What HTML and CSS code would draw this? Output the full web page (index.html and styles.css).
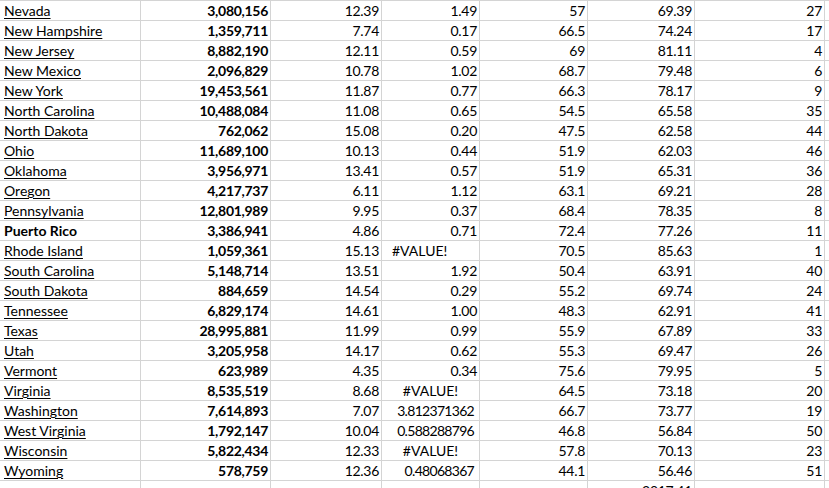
FILE: index.html
```html
<!DOCTYPE html>
<html>
<head>
<meta charset="utf-8">
<link rel="stylesheet" href="styles.css">
</head>
<body>
<div class="sheet">
  <div class="c name"><u>Nevada</u></div><div class="c pop">3,080,156</div><div class="c num">12.39</div><div class="c num">1.49</div><div class="c num">57</div><div class="c num">69.39</div><div class="c num">27</div><div class="c"></div>
  <div class="c name"><u>New Hampshire</u></div><div class="c pop">1,359,711</div><div class="c num">7.74</div><div class="c num">0.17</div><div class="c num">66.5</div><div class="c num">74.24</div><div class="c num">17</div><div class="c"></div>
  <div class="c name"><u>New Jersey</u></div><div class="c pop">8,882,190</div><div class="c num">12.11</div><div class="c num">0.59</div><div class="c num">69</div><div class="c num">81.11</div><div class="c num">4</div><div class="c"></div>
  <div class="c name"><u>New Mexico</u></div><div class="c pop">2,096,829</div><div class="c num">10.78</div><div class="c num">1.02</div><div class="c num">68.7</div><div class="c num">79.48</div><div class="c num">6</div><div class="c"></div>
  <div class="c name"><u>New York</u></div><div class="c pop">19,453,561</div><div class="c num">11.87</div><div class="c num">0.77</div><div class="c num">66.3</div><div class="c num">78.17</div><div class="c num">9</div><div class="c"></div>
  <div class="c name"><u>North Carolina</u></div><div class="c pop">10,488,084</div><div class="c num">11.08</div><div class="c num">0.65</div><div class="c num">54.5</div><div class="c num">65.58</div><div class="c num">35</div><div class="c"></div>
  <div class="c name"><u>North Dakota</u></div><div class="c pop">762,062</div><div class="c num">15.08</div><div class="c num">0.20</div><div class="c num">47.5</div><div class="c num">62.58</div><div class="c num">44</div><div class="c"></div>
  <div class="c name"><u>Ohio</u></div><div class="c pop">11,689,100</div><div class="c num">10.13</div><div class="c num">0.44</div><div class="c num">51.9</div><div class="c num">62.03</div><div class="c num">46</div><div class="c"></div>
  <div class="c name"><u>Oklahoma</u></div><div class="c pop">3,956,971</div><div class="c num">13.41</div><div class="c num">0.57</div><div class="c num">51.9</div><div class="c num">65.31</div><div class="c num">36</div><div class="c"></div>
  <div class="c name"><u>Oregon</u></div><div class="c pop">4,217,737</div><div class="c num">6.11</div><div class="c num">1.12</div><div class="c num">63.1</div><div class="c num">69.21</div><div class="c num">28</div><div class="c"></div>
  <div class="c name"><u>Pennsylvania</u></div><div class="c pop">12,801,989</div><div class="c num">9.95</div><div class="c num">0.37</div><div class="c num">68.4</div><div class="c num">78.35</div><div class="c num">8</div><div class="c"></div>
  <div class="c name bold">Puerto Rico</div><div class="c pop">3,386,941</div><div class="c num">4.86</div><div class="c num">0.71</div><div class="c num">72.4</div><div class="c num">77.26</div><div class="c num">11</div><div class="c"></div>
  <div class="c name"><u>Rhode Island</u></div><div class="c pop">1,059,361</div><div class="c num">15.13</div><div class="c err left">#VALUE!</div><div class="c num">70.5</div><div class="c num">85.63</div><div class="c num">1</div><div class="c"></div>
  <div class="c name"><u>South Carolina</u></div><div class="c pop">5,148,714</div><div class="c num">13.51</div><div class="c num">1.92</div><div class="c num">50.4</div><div class="c num">63.91</div><div class="c num">40</div><div class="c"></div>
  <div class="c name"><u>South Dakota</u></div><div class="c pop">884,659</div><div class="c num">14.54</div><div class="c num">0.29</div><div class="c num">55.2</div><div class="c num">69.74</div><div class="c num">24</div><div class="c"></div>
  <div class="c name"><u>Tennessee</u></div><div class="c pop">6,829,174</div><div class="c num">14.61</div><div class="c num">1.00</div><div class="c num">48.3</div><div class="c num">62.91</div><div class="c num">41</div><div class="c"></div>
  <div class="c name"><u>Texas</u></div><div class="c pop">28,995,881</div><div class="c num">11.99</div><div class="c num">0.99</div><div class="c num">55.9</div><div class="c num">67.89</div><div class="c num">33</div><div class="c"></div>
  <div class="c name"><u>Utah</u></div><div class="c pop">3,205,958</div><div class="c num">14.17</div><div class="c num">0.62</div><div class="c num">55.3</div><div class="c num">69.47</div><div class="c num">26</div><div class="c"></div>
  <div class="c name"><u>Vermont</u></div><div class="c pop">623,989</div><div class="c num">4.35</div><div class="c num">0.34</div><div class="c num">75.6</div><div class="c num">79.95</div><div class="c num">5</div><div class="c"></div>
  <div class="c name"><u>Virginia</u></div><div class="c pop">8,535,519</div><div class="c num">8.68</div><div class="c err">#VALUE!</div><div class="c num">64.5</div><div class="c num">73.18</div><div class="c num">20</div><div class="c"></div>
  <div class="c name"><u>Washington</u></div><div class="c pop">7,614,893</div><div class="c num">7.07</div><div class="c num long">3.812371362</div><div class="c num">66.7</div><div class="c num">73.77</div><div class="c num">19</div><div class="c"></div>
  <div class="c name"><u>West Virginia</u></div><div class="c pop">1,792,147</div><div class="c num">10.04</div><div class="c num long">0.588288796</div><div class="c num">46.8</div><div class="c num">56.84</div><div class="c num">50</div><div class="c"></div>
  <div class="c name"><u>Wisconsin</u></div><div class="c pop">5,822,434</div><div class="c num">12.33</div><div class="c err">#VALUE!</div><div class="c num">57.8</div><div class="c num">70.13</div><div class="c num">23</div><div class="c"></div>
  <div class="c name"><u>Wyoming</u></div><div class="c pop">578,759</div><div class="c num">12.36</div><div class="c num long">0.48068367</div><div class="c num">44.1</div><div class="c num">56.46</div><div class="c num">51</div><div class="c"></div>
  <div class="c name"></div><div class="c pop"></div><div class="c num"></div><div class="c num"></div><div class="c num"></div><div class="c num">2017.41</div><div class="c num"></div><div class="c"></div>
</div>
</body>
</html>
```
FILE: styles.css
```css
html, body {
  margin: 0;
  padding: 0;
  background: #ffffff;
  overflow: hidden;
}
body {
  width: 829px;
  height: 488px;
}
.sheet {
  display: grid;
  grid-template-columns: 140px 130px 111px 98px 108px 107px 130px 1fr;
  grid-auto-rows: 20px;
  font-family: Lato, "Noto Sans", sans-serif;
  font-size: 14px;
  color: #000000;
}
.c {
  box-sizing: border-box;
  border-top: 1px solid #d4d4d4;
  border-left: 1px solid #d4d4d4;
  height: 20px;
  line-height: 19px;
  white-space: nowrap;
  overflow: hidden;
  padding: 0 2px;
}
.name {
  border-left: none;
  padding-left: 4px;
  text-align: left;
}
.name u {
  text-decoration: underline;
  text-underline-offset: 2px;
  text-decoration-thickness: 1px;
}
.bold, .pop {
  font-weight: bold;
}
.pop, .num {
  text-align: right;
  letter-spacing: -0.3px;
}
.long {
  padding-right: 5px;
  letter-spacing: -0.7px;
}
.err {
  text-align: center;
}
.err.left {
  text-align: left;
  padding-left: 10px;
}
```
